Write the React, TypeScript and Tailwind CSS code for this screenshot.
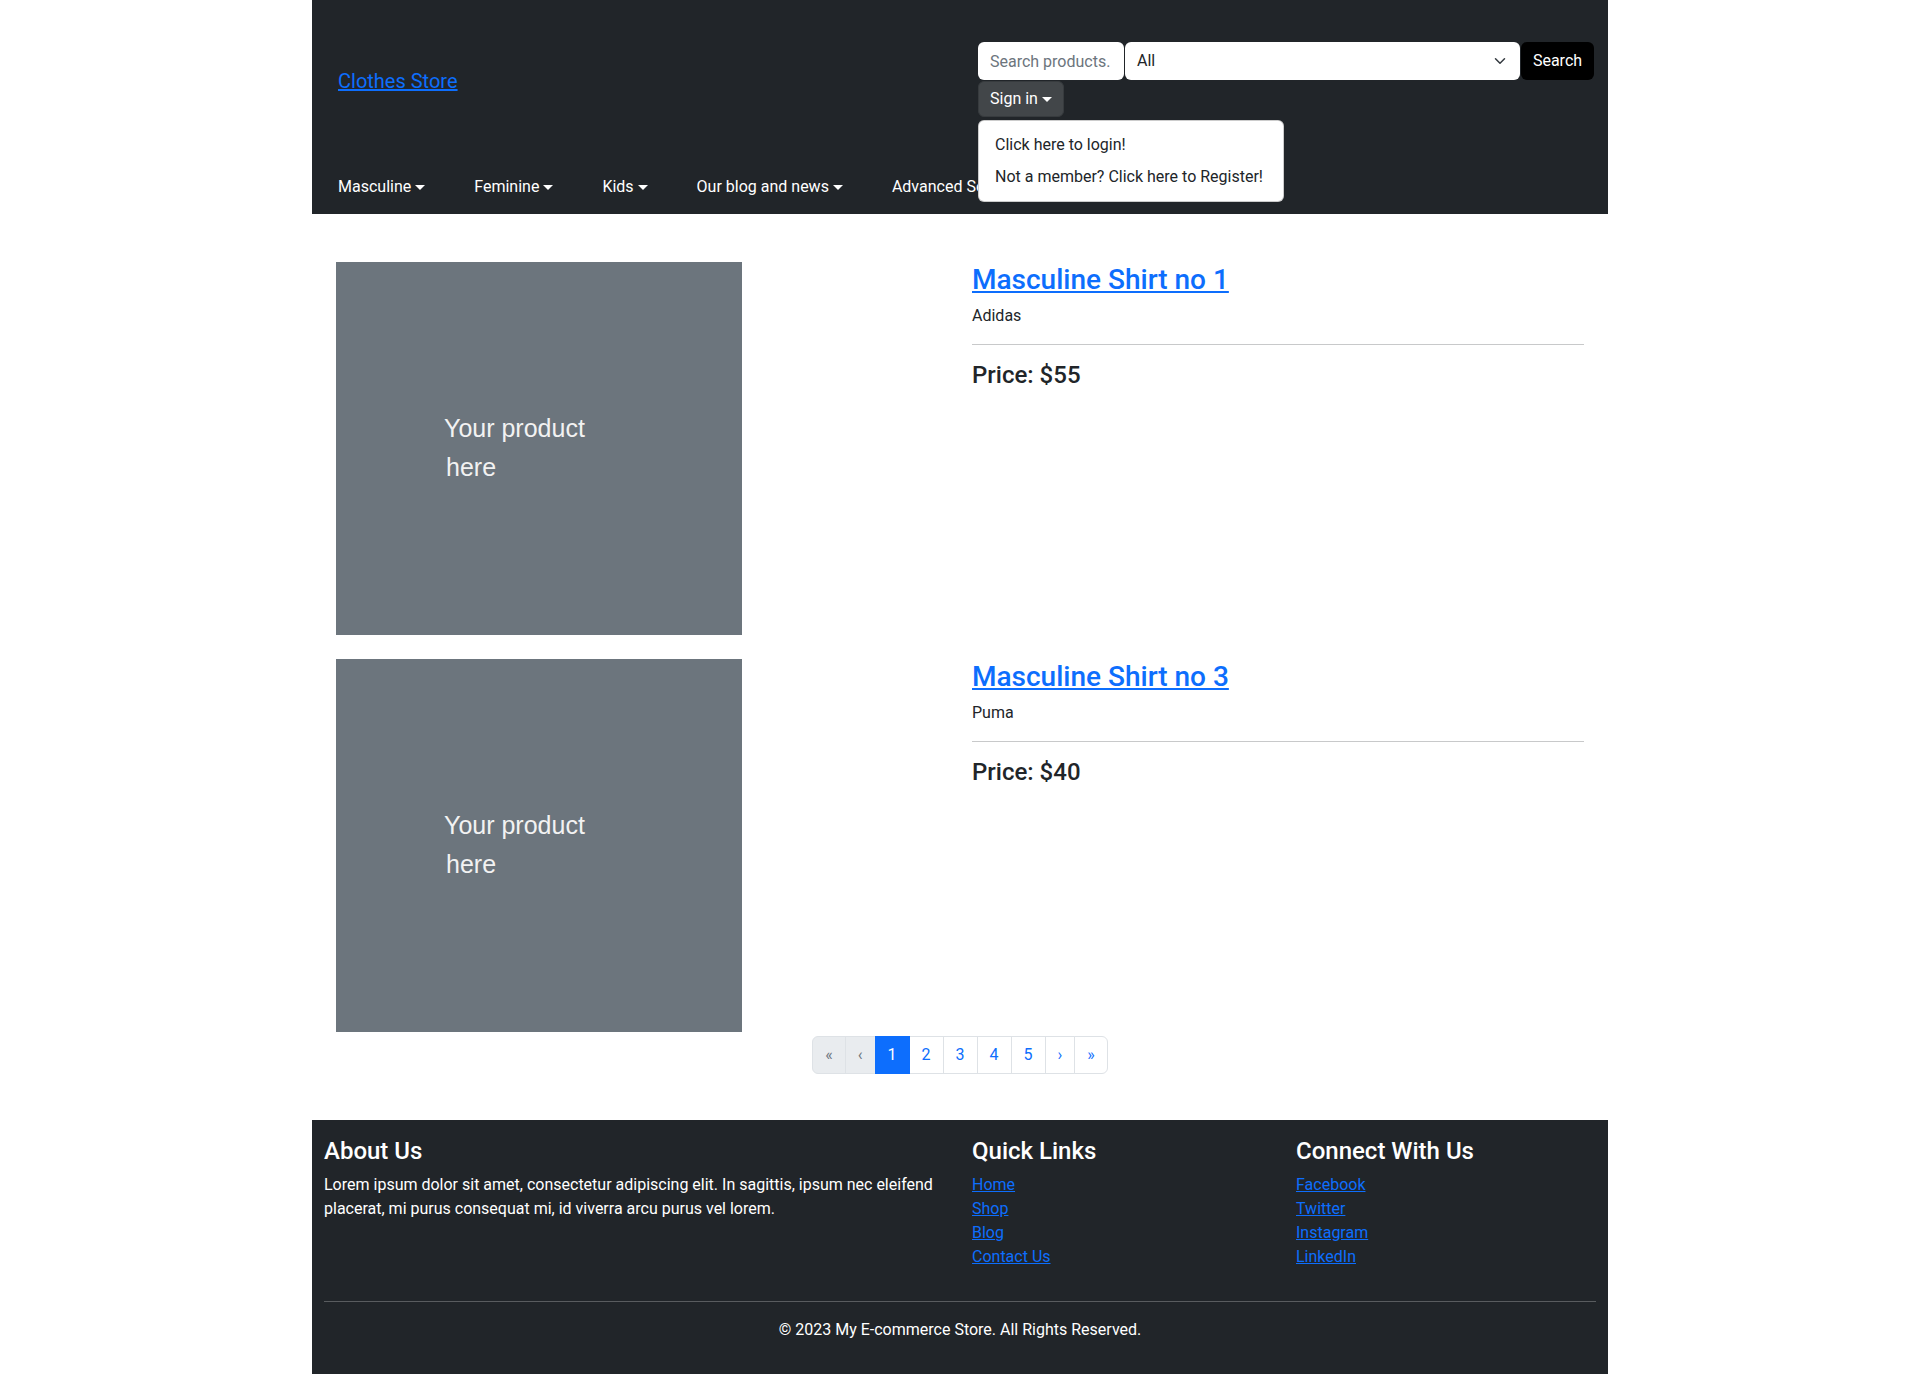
import React from "react";

function Caret() {
  return (
    <span className="inline-block ml-[4px] align-[4px] w-0 h-0 border-t-[5px] border-t-current border-x-[5px] border-x-transparent border-b-0" />
  );
}

const products = [
  { title: "Masculine Shirt no 1", brand: "Adidas", price: "$55" },
  { title: "Masculine Shirt no 3", brand: "Puma", price: "$40" },
];

export default function App() {
  return (
    <div className="font-['Roboto',sans-serif] text-[16px] leading-[24px] text-[#212529] bg-white min-h-[1374px]">
      <header className="w-[1296px] mx-auto bg-[#212529] h-[214px] pt-[42px] pl-[26px] pr-[14px]">
        <div className="flex justify-between items-center">
          <a href="#" className="pt-[2px] text-[20px] leading-[30px] text-[#0d6efd] underline">
            Clothes Store
          </a>
          <div className="w-[616px] relative">
            <div className="flex h-[38px]">
              <input
                placeholder="Search products."
                className="w-[146px] h-full bg-white rounded-[6px] px-[12px] text-[16px] text-[#212529] placeholder:text-[#6c757d] outline-none"
              />
              <div className="ml-px flex-1 h-full bg-white rounded-[6px] flex items-center justify-between pl-[12px] pr-[12px]">
                <span>All</span>
                <svg width="16" height="12" viewBox="0 0 16 16" fill="none">
                  <path d="m2 5 6 6 6-6" stroke="#343a40" strokeWidth="2" strokeLinecap="round" strokeLinejoin="round" />
                </svg>
              </div>
              <button className="ml-px w-[73px] h-full bg-black text-white rounded-[6px]">Search</button>
            </div>
            <button className="mt-[1px] h-[36px] px-[11px] bg-[#424649] rounded-[6px] border border-[#373b3e] text-white flex items-center">
              Sign in
              <Caret />
            </button>
            <div className="absolute top-[78px] left-0 w-[306px] bg-white rounded-[6px] border border-black/20 py-[8px] z-10">
              <div className="px-[16px] leading-[24px] py-[4px]">Click here to login!</div>
              <div className="px-[16px] leading-[24px] py-[4px]">Not a member? Click here to Register!</div>
            </div>
          </div>
        </div>
        <nav className="flex gap-[49px] mt-[58px] text-white">
          {["Masculine", "Feminine", "Kids", "Our blog and news"].map((n) => (
            <span key={n} className="flex items-center">
              {n}
              <Caret />
            </span>
          ))}
          <span>Advanced Search</span>
        </nav>
      </header>

      <main className="w-[1296px] mx-auto px-[24px] pt-[48px]">
        <div className="flex flex-col gap-[24px]">
          {products.map((p) => (
            <div key={p.title} className="grid grid-cols-2 gap-[24px]">
              <div>
                <div className="w-[406px] h-[373px] bg-[#6c757d] pt-[147px] pl-[108px] text-[#f2f2f2] font-['Liberation_Sans',Arial,sans-serif] text-[25px] leading-[39px]">
                  <div>Your product</div>
                  <div className="ml-[2px]">here</div>
                </div>
              </div>
              <div className="pt-[1px]">
                <a href="#" className="block w-fit text-[28px] leading-[1.2] font-medium text-[#0d6efd] underline mb-[7px]">
                  {p.title}
                </a>
                <p className="mb-[16px]">{p.brand}</p>
                <hr className="border-t border-[#c8c9ca] mb-[16px]" />
                <h4 className="text-[24px] leading-[1.2] font-medium">Price: {p.price}</h4>
              </div>
            </div>
          ))}
        </div>

        <div className="flex justify-center mt-[4px] mb-[46px]">
          <ul className="flex h-[38px]">
            {[
              { t: "«", s: "dis" },
              { t: "‹", s: "dis" },
              { t: "1", s: "act" },
              { t: "2", s: "" },
              { t: "3", s: "" },
              { t: "4", s: "" },
              { t: "5", s: "" },
              { t: "›", s: "" },
              { t: "»", s: "" },
            ].map((it, i) => (
              <li
                key={i}
                className={
                  "px-[12px] flex items-center border " +
                  (i === 0 ? "rounded-l-[6px] " : "-ml-px ") +
                  (i === 8 ? "rounded-r-[6px] " : "") +
                  (it.s === "dis"
                    ? "bg-[#e9ecef] text-[#6c757d] border-[#dee2e6]"
                    : it.s === "act"
                    ? "bg-[#0d6efd] text-white border-[#0d6efd] relative"
                    : "bg-white text-[#0d6efd] border-[#dee2e6]")
                }
              >
                {it.t}
              </li>
            ))}
          </ul>
        </div>
      </main>

      <footer className="w-[1296px] mx-auto bg-[#212529] text-white pt-[17px] pb-[16px]">
        <div className="grid grid-cols-[648px_324px_324px]">
          <div className="px-[12px]">
            <h4 className="text-[24px] leading-[1.2] font-medium mb-[7px]">About Us</h4>
            <p className="mb-[16px]">
              Lorem ipsum dolor sit amet, consectetur adipiscing elit. In sagittis, ipsum nec eleifend placerat, mi
              purus consequat mi, id viverra arcu purus vel lorem.
            </p>
          </div>
          <div className="px-[12px]">
            <h4 className="text-[24px] leading-[1.2] font-medium mb-[7px]">Quick Links</h4>
            <ul className="mb-[16px]">
              {["Home", "Shop", "Blog", "Contact Us"].map((l) => (
                <li key={l}>
                  <a href="#" className="text-[#0d6efd] underline">{l}</a>
                </li>
              ))}
            </ul>
          </div>
          <div className="px-[12px]">
            <h4 className="text-[24px] leading-[1.2] font-medium mb-[7px]">Connect With Us</h4>
            <ul className="mb-[16px]">
              {["Facebook", "Twitter", "Instagram", "LinkedIn"].map((l) => (
                <li key={l}>
                  <a href="#" className="text-[#0d6efd] underline">{l}</a>
                </li>
              ))}
            </ul>
          </div>
        </div>
        <hr className="mx-[12px] my-[16px] border-t border-[#595c5f]" />
        <p className="text-center mb-[16px]">© 2023 My E-commerce Store. All Rights Reserved.</p>
      </footer>
    </div>
  );
}
